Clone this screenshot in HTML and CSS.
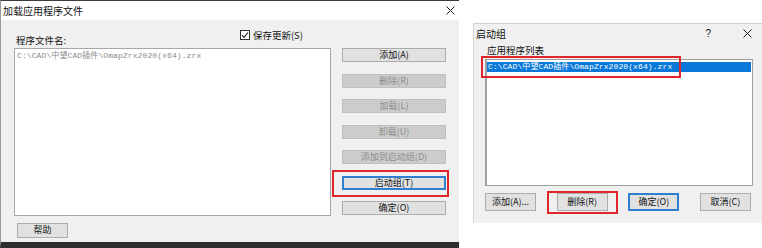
FILE: index.html
```html
<!DOCTYPE html>
<html lang="zh-CN">

<head>
  <meta charset="UTF-8">
  <meta name="viewport" content="width=device-width, initial-scale=1.0">
  <title>加载应用程序文件</title>
  <link rel="stylesheet" href="styles.css">
</head>

<body>
  <!-- 加载应用程序文件 -->
  <div class="dlg dlg-load">
    <div class="titlebar">
      <span>加载应用程序文件</span>
      <svg class="close" width="9" height="9" viewBox="0 0 9 9"><path d="M0.5 0.5L8.5 8.5M8.5 0.5L0.5 8.5" stroke="#222" stroke-width="1"/></svg>
    </div>
    <div class="load-body">
      <div class="files">
        <div class="files-head">
          <span class="files-label">程序文件名:</span>
          <label class="check">
            <span class="box"><svg width="8" height="8" viewBox="0 0 8 8"><path d="M1 4.2L3 6.3L7 1.5" fill="none" stroke="#222" stroke-width="1.1"/></svg></span>
            保存更新(S)
          </label>
        </div>
        <div class="listbox">
          <div class="item muted">C:\CAD\中望CAD插件\OmapZrx2020(x64).zrx</div>
        </div>
        <div class="help-row">
          <button class="btn help">帮助</button>
        </div>
      </div>
      <div class="actions">
        <button class="btn">添加(A)</button>
        <button class="btn off">删除(R)</button>
        <button class="btn off">加载(L)</button>
        <button class="btn off">卸载(U)</button>
        <button class="btn off">添加到启动组(D)</button>
        <button class="btn focus marked-wide">启动组(T)</button>
        <button class="btn">确定(O)</button>
      </div>
    </div>
  </div>

  <!-- 启动组 -->
  <div class="dlg dlg-startup">
    <div class="titlebar plain">
      <span>启动组</span>
      <span class="title-tools">
        <span class="help-mark">?</span>
        <svg class="close" width="9" height="9" viewBox="0 0 9 9"><path d="M0.5 0.5L8.5 8.5M8.5 0.5L0.5 8.5" stroke="#222" stroke-width="1"/></svg>
      </span>
    </div>
    <div class="list-label">应用程序列表</div>
    <div class="listbox startup-list">
      <div class="item selected marked-item">C:\CAD\中望CAD插件\OmapZrx2020(x64).zrx</div>
    </div>
    <div class="startup-actions">
      <button class="btn wide">添加(A)...</button>
      <button class="btn wide marked-btn">删除(R)</button>
      <button class="btn wide focus">确定(O)</button>
      <button class="btn wide">取消(C)</button>
    </div>
  </div>
</body>

</html>
```

FILE: styles.css
```css
body {
  margin: 0;
  width: 762px;
  height: 248px;
  overflow: hidden;
  background: #fff;

  display: flex;
  align-items: flex-start;
  gap: 14px;

  font-family: "Noto Sans CJK SC", "Liberation Sans", sans-serif;
  font-size: 9.5px;
  color: #111;
}

.dlg {
  box-sizing: border-box;
  flex-shrink: 0;
  background: #f0f0f0;
}

/* 左侧对话框 */
.dlg-load {
  width: 459px;
  height: 248px;
  border-top: 1px solid #3c3c3c;
  border-left: 1px solid #9a9a9a;
  border-bottom: 6px solid #2e2e2e;
}

.titlebar {
  height: 19px;
  background: #fff;
  padding: 0 4px 0 2px;

  display: flex;
  align-items: center;
  justify-content: space-between;

  font-size: 10px;
}

.load-body {
  display: flex;
  padding: 10px 0 0 13px;
}

.files {
  width: 317px;
  display: flex;
  flex-direction: column;
}

.files-head {
  height: 18px;
  display: flex;
  justify-content: space-between;
  padding-right: 28px;
}

.files-label {
  align-self: flex-end;
  padding-left: 2px;
  line-height: 12px;
  padding-bottom: 2px;
}

.check {
  display: flex;
  align-items: flex-start;
  gap: 3px;
  line-height: 11px;
  margin-top: 0;
}

.box {
  box-sizing: border-box;
  width: 10px;
  height: 10px;
  border: 1px solid #333;
  background: #fff;

  display: flex;
  align-items: center;
  justify-content: center;
}

.listbox {
  box-sizing: border-box;
  height: 168px;
  background: #fff;
  border: 1px solid #a8a8a8;
  padding: 2px 1px;
}

.item {
  font-family: "Liberation Mono", "Noto Sans CJK SC", monospace;
  font-size: 8px;
  line-height: 10px;
  height: 10px;
  white-space: nowrap;
  padding-left: 1px;
  letter-spacing: 0.1px;
}

.muted {
  color: #8a8a8a;
}

.help-row {
  padding: 6px 0 0 3px;
}

.btn {
  box-sizing: border-box;
  height: 14px;
  padding: 0;
  margin: 0;
  background: #e1e1e1;
  border: 1px solid #adadad;
  font-family: "Noto Sans CJK SC", "Liberation Sans", sans-serif;
  font-size: 9px;
  line-height: 12px;
  color: #111;
  position: relative;
}

.btn.help {
  width: 51px;
  height: 15px;
}

.btn.off {
  background: #cccccc;
  border-color: #bfbfbf;
  color: #8c8c8c;
}

.btn.focus {
  border: 2px solid #2f7fd1;
  line-height: 10px;
}

.actions {
  width: 104px;
  margin: 18px 0 0 11px;

  display: flex;
  flex-direction: column;
  gap: 11.5px;
}

/* 红色标注框 */
.marked-wide::after,
.marked-btn::after,
.marked-item::after {
  content: "";
  position: absolute;
  border: 2px solid #e0262c;
  pointer-events: none;
}

.marked-wide::after {
  left: -12px;
  right: -5px;
  top: -8px;
  bottom: -9px;
}

/* 右侧对话框 */
.dlg-startup {
  width: 289px;
  height: 200px;
  margin-top: 23px;
  border-top: 1px solid #cfcfcf;
  border-left: 1px solid #d6d6d6;
  display: flex;
  flex-direction: column;
}

.titlebar.plain {
  height: 18px;
  background: #f0f0f0;
  padding: 0 10px 0 2px;
}

.title-tools {
  display: flex;
  align-items: center;
  gap: 32px;
}

.help-mark {
  font-family: "Liberation Sans", sans-serif;
  font-size: 10px;
}

.list-label {
  height: 16px;
  line-height: 16px;
  padding-left: 13px;
}

.startup-list {
  height: 127px;
  margin: 1px 9px 0 11px;
  border: 1px solid #a0a0a0;
  border-left-width: 2px;
  padding: 2px 1px 0 0;
  position: relative;
}

.selected {
  background: #0a78d8;
  color: #fff;
  position: relative;
}

.marked-item::after {
  left: -6px;
  top: -6px;
  width: 196px;
  height: 18px;
}

.startup-actions {
  display: flex;
  justify-content: space-between;
  margin: 7px 11px 0 11px;
}

.btn.wide {
  width: 51px;
  height: 18px;
  line-height: 16px;
}

.btn.wide.focus {
  line-height: 14px;
}

.marked-btn::after {
  left: -11px;
  right: -11px;
  top: -3px;
  bottom: -4px;
}
```
